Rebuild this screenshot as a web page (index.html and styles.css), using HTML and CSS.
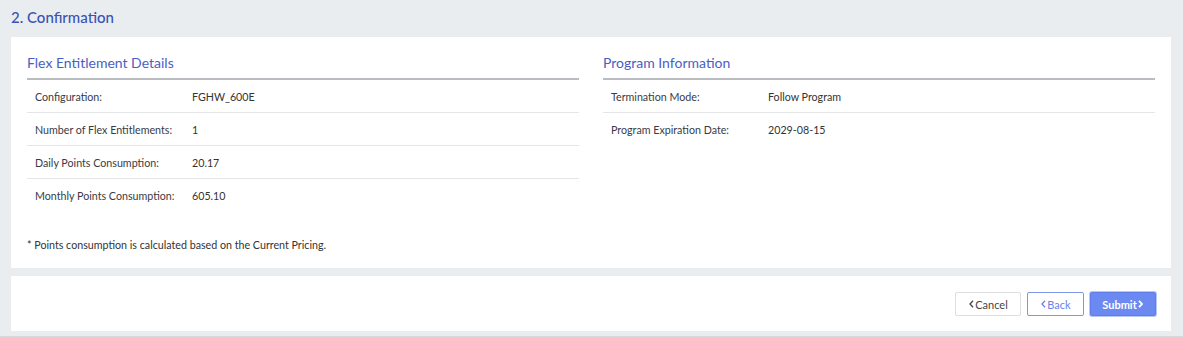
FILE: index.html
```html
<!DOCTYPE html>
<html lang="en">
<head>
<meta charset="UTF-8" />
<meta name="viewport" content="width=device-width, initial-scale=1" />
<title>Confirmation</title>
<link rel="stylesheet" href="styles.css">
</head>
<body>

<div class="page">
  <h2 class="step-title">2. Confirmation</h2>

  <div class="panel details">
    <div class="columns">
      <section class="col">
        <h3 class="section-title">Flex Entitlement Details</h3>
        <div class="row"><span class="label">Configuration:</span><span class="value">FGHW_600E</span></div>
        <div class="row"><span class="label">Number of Flex Entitlements:</span><span class="value">1</span></div>
        <div class="row"><span class="label">Daily Points Consumption:</span><span class="value">20.17</span></div>
        <div class="row last"><span class="label">Monthly Points Consumption:</span><span class="value">605.10</span></div>
      </section>
      <section class="col">
        <h3 class="section-title">Program Information</h3>
        <div class="row"><span class="label">Termination Mode:</span><span class="value">Follow Program</span></div>
        <div class="row last"><span class="label">Program Expiration Date:</span><span class="value">2029-08-15</span></div>
      </section>
    </div>
    <p class="note">* Points consumption is calculated based on the Current Pricing.</p>
  </div>

  <div class="panel actions">
    <button class="btn btn-cancel"><svg class="chev" viewBox="0 0 5 8"><path d="M4 0.8L1 4l3 3.2"/></svg>Cancel</button>
    <button class="btn btn-back"><svg class="chev" viewBox="0 0 5 8"><path d="M4 0.8L1 4l3 3.2"/></svg>Back</button>
    <button class="btn btn-submit">Submit<svg class="chev" viewBox="0 0 5 8"><path d="M1 0.8L4 4L1 7.2"/></svg></button>
  </div>
</div>

</body>
</html>
```

FILE: styles.css
```css
body {
  margin: 0;
  font-family: Lato, 'Open Sans', sans-serif;
  background: #e9edf0;
  color: #333;
}
.page {
  padding: 0 12px 5px 11px;
  border-bottom: 1px solid #d6dadd;
  height: 331px;
}
.step-title {
  margin: 0;
  height: 37px;
  line-height: 35px;
  font-size: 15px;
  font-weight: 500;
  color: #3b51b5;
}
/* 白いパネル */
.panel {
  background: #fff;
}
.details {
  padding: 16px 16px 1px;
  height: 214px;
}
.columns {
  display: grid;
  grid-template-columns: 1fr 1fr;
  column-gap: 24px;
}
.section-title {
  margin: 0;
  font-size: 14px;
  font-weight: 400;
  color: #4a5ec4;
  height: 25px;
  line-height: 20px;
  border-bottom: 2px solid #b9bcc0;
}
.row {
  box-sizing: border-box;
  display: flex;
  align-items: center;
  height: 33px;
  padding-left: 8px;
  font-size: 10.7px;
  border-bottom: 1px solid #e4e6e8;
}
.row.last {
  border-bottom: none;
}
.label {
  width: 157px;
  color: #3a3a44;
}
.value {
  color: #333;
}
.note {
  margin: 26px 0 0;
  font-size: 10.7px;
  color: #333;
}
/* ボタン */
.actions {
  margin-top: 8px;
  display: flex;
  justify-content: flex-end;
  gap: 6px;
  padding: 16px 15px 15px;
}
.btn {
  height: 24px;
  font-family: inherit;
  font-size: 11px;
  border-radius: 2px;
  cursor: pointer;
  display: flex;
  align-items: center;
  justify-content: center;
  padding: 0;
}
.chev {
  width: 5px;
  height: 8px;
  margin: 0 1px;
  fill: none;
  stroke: currentColor;
  stroke-width: 1.3;
}
.btn-cancel {
  width: 66px;
  background: #fff;
  border: 1px solid #dcdee0;
  color: #444;
}
.btn-back {
  width: 57px;
  background: #fff;
  border: 1px solid #7f95e8;
  color: #6a82e6;
}
.btn-submit {
  width: 66px;
  background: #6b89f0;
  border: 1px solid #5f7ee9;
  color: #fff;
  font-weight: 700;
  box-shadow: 0 0 0 1px #b8c8f7;
}
.btn-submit .chev {
  stroke-width: 1.8;
}
```
